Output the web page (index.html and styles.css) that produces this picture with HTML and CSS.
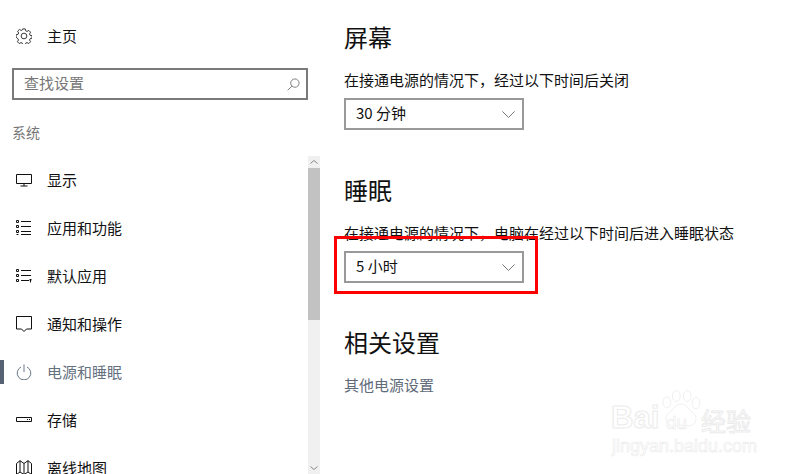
FILE: index.html
```html
<!DOCTYPE html>
<html lang="zh-CN">
  <head>
    <meta charset="UTF-8" />
    <title>设置</title>
    <link rel="stylesheet" href="styles.css">
  </head>
  <body>
    <div class="sidebar">
      <div class="home">
        <svg class="icon" viewBox="0 0 18 18"><g fill="none" stroke="#222" stroke-width="1"><circle cx="9" cy="9" r="3.200"/><path d="M7.600 1h2.800l.5 2.200 1.500.7 2-1.200 2 2-1.200 2 .7 1.500 2.200.5v2.800l-2.200.5-.7 1.500 1.200 2-2 2-2-1.200-1.500.7-.5 2.200H7.600l-.5-2.200-1.500-.7-2 1.200-2-2 1.200-2-.7-1.500L.1 10.400V7.600l2.200-.5.7-1.500-1.200-2 2-2 2 1.200 1.500-.7z" stroke-linejoin="round"/></g></svg>
        <span>主页</span>
      </div>
      <div class="search">
        <span>查找设置</span>
        <svg class="search-icon" viewBox="0 0 14 14"><g fill="none" stroke="#777" stroke-width="1"><circle cx="8.500" cy="5.500" r="4.500"/><path d="M5.300 8.700L.7 13.300"/></g></svg>
      </div>
      <div class="group-title">系统</div>
      <div class="nav-wrap">
        <ul class="nav">
          <li>
            <svg class="icon" viewBox="0 0 16 16"><path d="M.5 2.500h15v9H.5zM8 11.500v2.500M4.500 14h7" fill="none" stroke="#111"/></svg>
            <span>显示</span>
          </li>
          <li>
            <svg class="icon" viewBox="0 0 16 16"><path d="M.5 .5h2v2h-2zM.5 5.500h2v2h-2zM.5 10.500h2v2h-2zM.5 14.500h2M5 1.500h10M5 6.500h10M5 11.500h10M5 14.500h10" fill="none" stroke="#111"/></svg>
            <span>应用和功能</span>
          </li>
          <li>
            <svg class="icon" viewBox="0 0 16 16"><path d="M.5 1.500h2v2h-2zM.5 6.500h2v2h-2zM.5 11.500h2v2h-2zM5 2.500h10M5 7.500h10M5 12.500h8M14.500 14.500v-3.500M13 12.500l1.500-1.500 1.500 1.500" fill="none" stroke="#111"/></svg>
            <span>默认应用</span>
          </li>
          <li>
            <svg class="icon" viewBox="0 0 16 16"><path d="M.5 .5h15v12.500h-5L8 15.500 5.500 13h-5z" fill="none" stroke="#111"/></svg>
            <span>通知和操作</span>
          </li>
          <li class="active">
            <svg class="icon" viewBox="0 0 16 16"><path d="M5 3a6.800 6.800 0 1 0 6 0M8 .5v7.500" fill="none" stroke="#6b7787"/></svg>
            <span>电源和睡眠</span>
          </li>
          <li>
            <svg class="icon" viewBox="0 0 16 16"><path d="M.5 5.500h15v4H.5zM11 7.500h1M13 7.500h1" fill="none" stroke="#111"/></svg>
            <span>存储</span>
          </li>
          <li>
            <svg class="icon" viewBox="0 0 16 16"><path d="M.5 3.500L4 .7l4 2.800 4-2.800 3.500 2.800v11L12 12l-4 2.500L4 12 .5 14.500zM4 .7V12M8 3.500v11M12 .7V12" fill="none" stroke="#111"/></svg>
            <span>离线地图</span>
          </li>
        </ul>
        <div class="scrollbar">
          <svg class="arrow" viewBox="0 0 12 12"><path d="M2.500 7.500L6 4.500l3.500 3" fill="none" stroke="#888"/></svg>
          <div class="thumb"></div>
          <div class="track"></div>
          <svg class="arrow" viewBox="0 0 12 12"><path d="M2.500 4.500L6 7.500l3.500-3" fill="none" stroke="#888"/></svg>
        </div>
      </div>
    </div>

    <div class="content">
      <section class="screen">
        <h2>屏幕</h2>
        <p>在接通电源的情况下，经过以下时间后关闭</p>
        <div class="select">
          <span>30 分钟</span>
          <svg class="chevron" viewBox="0 0 13 7"><path d="M.4 .4L6.500 6.500 12.600 .4" fill="none" stroke="#777"/></svg>
        </div>
      </section>
      <section class="sleep">
        <h2>睡眠</h2>
        <p>在接通电源的情况下，电脑在经过以下时间后进入睡眠状态</p>
        <div class="select">
          <span>5 小时</span>
          <svg class="chevron" viewBox="0 0 13 7"><path d="M.4 .4L6.500 6.500 12.600 .4" fill="none" stroke="#777"/></svg>
        </div>
      </section>
      <section class="related">
        <h2>相关设置</h2>
        <a class="link">其他电源设置</a>
      </section>
    </div>

    <div class="highlight"></div>

    <div class="watermark">
      <div class="wm-top">
        <span class="wm-bai">Bai</span>
        <svg class="wm-paw" viewBox="0 0 56 50"><g fill="#fff" stroke="#ebebeb" stroke-width="1"><ellipse cx="10" cy="14" rx="5" ry="7"/><ellipse cx="22" cy="6" rx="5" ry="7"/><ellipse cx="36" cy="6" rx="5" ry="7"/><ellipse cx="47" cy="15" rx="5" ry="7"/><path d="M28 16c7 0 9 7 15 11 7 5 5 17-5 17-4 0-6-1-10-1s-6 1-10 1c-10 0-12-12-5-17 6-4 8-11 15-11z"/></g></svg>
        <span class="wm-du">du</span>
        <span class="wm-jy">经验</span>
      </div>
      <div class="wm-url">jingyan.baidu.com</div>
    </div>
  </body>
</html>
```

FILE: styles.css
```css
body {
  display: flex;
  margin: 0;
  height: 474px;
  overflow: hidden;
  background-color: #fff;
  color: #111;
  font-family: "Noto Sans CJK SC", "Noto Sans", sans-serif;
  font-size: 15px;
}

.sidebar {
  width: 320px;
  flex-shrink: 0;
  height: 474px;
  overflow: hidden;
}

.home {
  display: flex;
  align-items: center;
  height: 24px;
  padding: 24px 0 0 16px;
}

.home span,
.nav span {
  padding-bottom: 2px;
}

.search span,
.select span {
  padding-bottom: 3px;
}

.icon {
  width: 16px;
  height: 16px;
  flex-shrink: 0;
  margin-right: 15px;
}

.search {
  display: flex;
  align-items: center;
  justify-content: space-between;
  box-sizing: border-box;
  width: 296px;
  height: 32px;
  margin: 20px 0 0 12px;
  padding: 0 6px 0 10px;
  border: 2px solid #7a7a7a;
  color: #777;
}

.search-icon {
  width: 13px;
  height: 13px;
}

.group-title {
  height: 20px;
  margin: 22px 0 0 12px;
  line-height: 20px;
  font-size: 14px;
  color: #767676;
}

.nav-wrap {
  display: flex;
  margin-top: 14px;
  height: 318px;
}

.nav {
  flex: 1;
  list-style: none;
  margin: 0;
  padding: 0;
  height: 318px;
  overflow: hidden;
}

.nav li {
  display: flex;
  align-items: center;
  box-sizing: border-box;
  height: 48px;
  padding-left: 16px;
}

.nav li.active {
  color: #66717f;
  padding-left: 0;
}

.nav li.active:before {
  content: "";
  width: 4px;
  height: 24px;
  margin-right: 12px;
  background-color: #566273;
}

.scrollbar {
  display: flex;
  flex-direction: column;
  width: 12px;
  background-color: #f0f0f0;
}

.arrow {
  width: 12px;
  height: 12px;
}

.thumb {
  height: 152px;
  background-color: #c2c2c2;
}

.track {
  flex: 1;
}

.content {
  padding-left: 24px;
}

h2 {
  margin: 0;
  font-size: 24px;
  font-weight: 400;
  line-height: 34px;
}

p {
  margin: 0;
  line-height: 22px;
}

.screen {
  padding-top: 20px;
}

.screen p {
  margin-top: 15px;
}

.select {
  display: flex;
  align-items: center;
  justify-content: space-between;
  box-sizing: border-box;
  width: 180px;
  height: 32px;
  margin-top: 7px;
  padding: 0 7px 0 10px;
  border: 2px solid #999;
}

.chevron {
  width: 13px;
  height: 7px;
}

.sleep {
  padding-top: 43px;
}

.sleep p {
  margin-top: 15px;
}

.related {
  padding-top: 42px;
}

.link {
  display: block;
  margin-top: 15px;
  line-height: 22px;
  color: #5f6b7a;
}

.highlight {
  position: absolute;
  left: 334px;
  top: 236px;
  box-sizing: border-box;
  width: 204px;
  height: 58px;
  border: 3px solid #f00;
}

.watermark {
  position: absolute;
  left: 611px;
  top: 394px;
  width: 150px;
  color: #fff;
  font-family: "Liberation Sans", sans-serif;
}

.wm-top {
  display: flex;
  align-items: flex-end;
  height: 40px;
  -webkit-text-stroke: 1px #ebebeb;
}

.wm-bai {
  font-size: 31px;
  line-height: 32px;
  font-weight: 700;
}

.wm-paw {
  position: absolute;
  left: 48px;
  top: -6px;
  width: 44px;
  height: 46px;
}

.wm-du {
  position: absolute;
  left: 55px;
  top: 20px;
  font-size: 19px;
  line-height: 18px;
  -webkit-text-stroke: .6px #ebebeb;
}

.wm-jy {
  position: absolute;
  left: 90px;
  top: 12px;
  font-family: "Noto Sans CJK SC", sans-serif;
  font-size: 25px;
  line-height: 28px;
  white-space: nowrap;
}

.wm-url {
  margin-top: 3px;
  margin-left: 1px;
  font-size: 18px;
  line-height: 18px;
  white-space: nowrap;
  -webkit-text-stroke: .6px #ebebeb;
}
```
